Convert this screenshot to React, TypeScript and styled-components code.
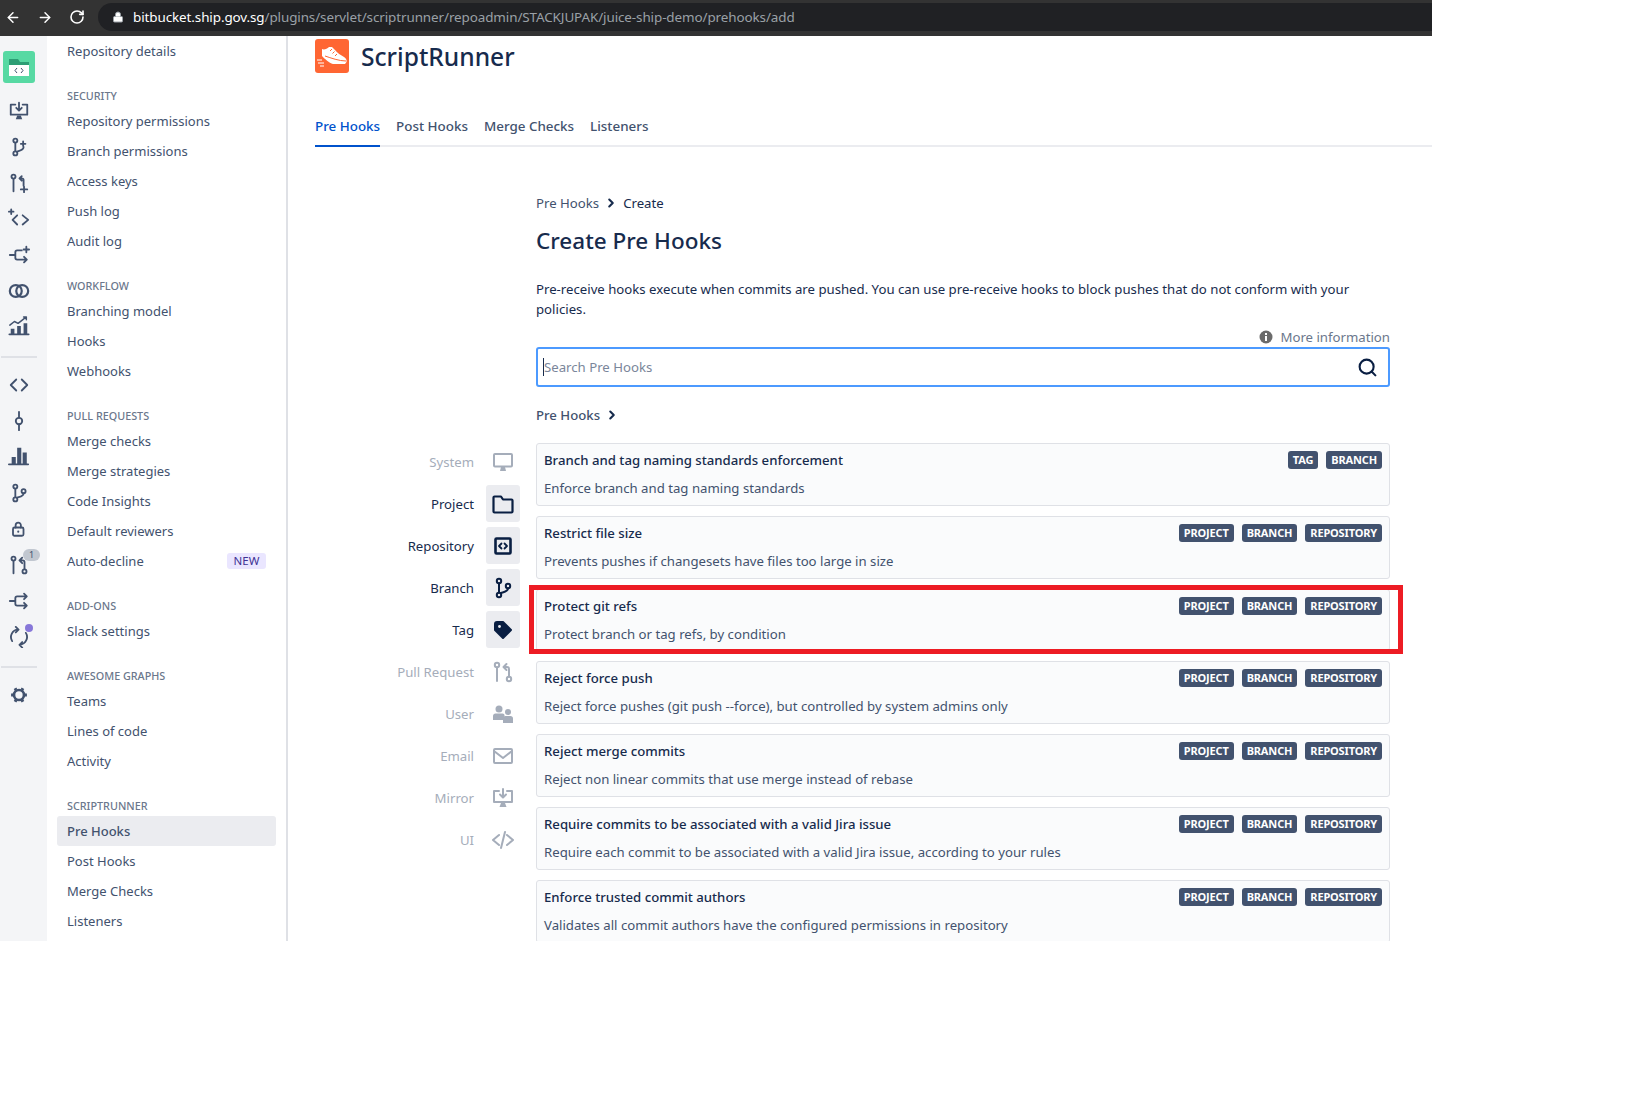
import React from 'react';
import styled, { createGlobalStyle } from 'styled-components';
import { ArrowLeft, ArrowRight, RotateCw, Lock, Search, ChevronRight } from 'lucide-react';

const Global = createGlobalStyle`
  html, body { margin: 0; padding: 0; background: #fff; }
  body { font-family: "Noto Sans", "Open Sans", sans-serif; font-size: 13px; color: #172b4d; }
  * { box-sizing: border-box; }
`;

const Frame = styled.div`
  width: 1432px;
  height: 941px;
  overflow: hidden;
  display: flex;
  flex-direction: column;
`;

const BrowserBar = styled.div`
  height: 36px;
  flex: none;
  background: #333333;
  display: flex;
  align-items: flex-start;
  padding: 3px 0 0 5px;
  color: #fff;
`;

const NavButton = styled.div`
  width: 16px;
  height: 28px;
  margin-right: 16px;
  display: flex;
  align-items: center;
  justify-content: center;
`;

const Address = styled.div`
  flex: 1;
  height: 28px;
  margin-left: -3px;
  border-radius: 14px 0 0 14px;
  background: #202124;
  display: flex;
  align-items: center;
  padding-left: 14px;
  gap: 9px;
  font-size: 13.45px;
  letter-spacing: -0.1px;
  color: #9aa0a6;
  white-space: nowrap;
  b { font-weight: 400; color: #fff; }
`;

const Shell = styled.div`
  flex: 1;
  min-height: 0;
  display: flex;
`;

const Rail = styled.div`
  width: 47px;
  flex: none;
  background: #f4f5f7;
  padding: 15px 9px 0 0;
  display: flex;
  flex-direction: column;
  align-items: center;
`;

const RepoLogo = styled.div`
  width: 32px;
  height: 32px;
  margin-bottom: 10px;
  border-radius: 3px;
  background: #57d9a3;
  display: flex;
  align-items: center;
  justify-content: center;
`;

const RailIcon = styled.div`
  position: relative;
  width: 38px;
  height: 36px;
  flex: none;
  display: flex;
  align-items: center;
  justify-content: center;
  color: #42526e;
`;

const RailRule = styled.div`
  width: 36px;
  height: 2px;
  flex: none;
  margin: 11px 0 9px;
  background: #dfe1e6;
`;

const CountBadge = styled.span`
  position: absolute;
  left: 23px;
  top: 2px;
  width: 17px;
  height: 12px;
  border-radius: 6px;
  background: #c1c7d0;
  color: #42526e;
  font-size: 9px;
  line-height: 12px;
  text-align: center;
`;

const Dot = styled.span`
  position: absolute;
  left: 25px;
  top: 5px;
  width: 8px;
  height: 8px;
  border-radius: 50%;
  background: #8777d9;
`;

const NavPanel = styled.nav`
  width: 241px;
  flex: none;
  padding: 0 10px;
  border-right: 2px solid #dfe1e6;
`;

const NavSection = styled.div`
  & + & { margin-top: 20px; }
`;

const NavHeading = styled.div`
  height: 20px;
  line-height: 20px;
  padding-left: 10px;
  font-size: 10.8px;
  font-weight: 500;
  color: #6b778c;
  text-transform: uppercase;
`;

const NavItem = styled.div<{ $active?: boolean }>`
  height: 30px;
  line-height: 30px;
  padding: 0 10px;
  border-radius: 3px;
  display: flex;
  justify-content: space-between;
  align-items: center;
  color: #42526e;
  font-weight: ${p => (p.$active ? 500 : 400)};
  background: ${p => (p.$active ? '#ebecf0' : 'transparent')};
`;

const NewLozenge = styled.span`
  width: 39px;
  height: 16px;
  line-height: 16px;
  border-radius: 3px;
  background: #eae6ff;
  color: #403294;
  font-size: 11.5px;
  text-align: center;
`;

const Content = styled.main`
  flex: 1;
  min-width: 0;
  padding: 3px 42px 0 27px;
  overflow: hidden;
  font-size: 13.2px;
`;

const Brand = styled.header`
  display: flex;
  align-items: center;
  gap: 12px;
  height: 34px;
`;

const BrandTitle = styled.h1`
  margin: 0;
  font-size: 24.6px;
  font-weight: 500;
  color: #172b4d;
`;

const Tabs = styled.div`
  display: flex;
  gap: 16px;
  margin: 37px -42px 0 0;
  height: 37px;
  border-bottom: 2px solid #ebecf0;
`;

const Tab = styled.div<{ $active?: boolean }>`
  height: 37px;
  line-height: 32px;
  font-size: 13.4px;
  font-weight: 500;
  color: ${p => (p.$active ? '#0052cc' : '#42526e')};
  border-bottom: 2px solid ${p => (p.$active ? '#0052cc' : 'transparent')};
`;

const Intro = styled.section`
  margin: 46px 0 0 221px;
`;

const Crumbs = styled.div`
  height: 20px;
  display: flex;
  align-items: center;
  gap: 5px;
  color: #42526e;
  span:last-child { color: #172b4d; }
`;

const PageTitle = styled.h2`
  margin: 10px 0 0;
  height: 36px;
  line-height: 36px;
  font-size: 22.5px;
  font-weight: 500;
  color: #172b4d;
`;

const Lead = styled.p`
  margin: 20px 0 0;
  line-height: 20px;
  color: #172b4d;
`;

const InfoRow = styled.div`
  margin-top: 8px;
  height: 20px;
  display: flex;
  justify-content: flex-end;
  align-items: center;
  gap: 7px;
  color: #6b778c;
`;

const SearchBox = styled.div`
  height: 40px;
  border: 2px solid #4c9aff;
  border-radius: 3px;
  display: flex;
  align-items: center;
  padding: 0 10px 0 5px;
  color: #091e42;
`;

const Caret = styled.span`
  width: 1px;
  height: 18px;
  flex: none;
  background: #172b4d;
`;

const SearchInput = styled.input`
  flex: 1;
  min-width: 0;
  border: 0;
  outline: 0;
  padding: 0;
  background: transparent;
  font: inherit;
  &::placeholder { color: #7a869a; opacity: 1; }
`;

const GroupLabel = styled.div`
  margin-top: 18px;
  height: 20px;
  display: flex;
  align-items: center;
  gap: 5px;
  font-weight: 500;
  color: #42526e;
`;

const Lower = styled.div`
  margin-top: 18px;
  display: flex;
  gap: 16px;
  align-items: flex-start;
`;

const Categories = styled.div`
  width: 205px;
  flex: none;
  display: flex;
  flex-direction: column;
  gap: 5px;
`;

const CategoryRow = styled.div<{ $on?: boolean }>`
  height: 37px;
  display: flex;
  justify-content: flex-end;
  align-items: center;
  gap: 12px;
  color: ${p => (p.$on ? '#172b4d' : '#a5adba')};
`;

const CategoryIcon = styled.div<{ $on?: boolean }>`
  width: 34px;
  height: 37px;
  border-radius: 3px;
  display: flex;
  align-items: center;
  justify-content: center;
  color: ${p => (p.$on ? '#091e42' : '#a5adba')};
  background: ${p => (p.$on ? '#ebecf0' : 'transparent')};
`;

const Cards = styled.div`
  flex: 1;
  min-width: 0;
  display: flex;
  flex-direction: column;
  gap: 10px;
`;

const Card = styled.article`
  position: relative;
  height: 62.8px;
  flex: none;
  padding: 6px 7px 0;
  background: #fafbfc;
  border: 1px solid #dfe1e6;
  border-radius: 3px;
`;

const CardTop = styled.div`
  display: flex;
  justify-content: space-between;
  align-items: flex-start;
`;

const CardTitle = styled.div`
  font-weight: 500;
  line-height: 20px;
  color: #172b4d;
`;

const CardText = styled.div`
  margin-top: 8px;
  line-height: 20px;
  color: #42526e;
`;

const Scopes = styled.div`
  display: flex;
  gap: 8px;
  margin-top: 1px;
`;

const Scope = styled.span`
  height: 18px;
  line-height: 18px;
  padding: 0 5px;
  border-radius: 3px;
  background: #42526e;
  color: #fff;
  font-size: 11px;
  font-weight: 700;
  letter-spacing: -0.15px;
`;

const Callout = styled.div`
  position: absolute;
  inset: -5px -14px -4px -8px;
  border: 5px solid #ed1c24;
  pointer-events: none;
`;

type IconProps = { size?: number; color?: string };

const Svg: React.FC<IconProps & { children: React.ReactNode }> = ({ size = 24, color = 'currentColor', children }) => (
  <svg width={size} height={size} viewBox="0 0 24 24" fill="none" stroke={color} strokeWidth={2} strokeLinecap="round" strokeLinejoin="round">
    {children}
  </svg>
);

const MirrorIcon = (p: IconProps) => (
  <Svg {...p}>
    <path d="M8 5H3v11h18V5h-5" />
    <path d="M12 3v8M9 8.500l3 3 3-3" />
    <path d="M8.500 21l1.500-4h4l1.500 4z" fill="currentColor" stroke="none" />
  </Svg>
);
const BranchIcon = (p: IconProps) => (
  <Svg {...p}>
    <circle cx="8" cy="5" r="2.200" />
    <circle cx="8" cy="19" r="2.200" />
    <circle cx="17" cy="10" r="2.200" />
    <path d="M8 7.500v9M17 12.500c0 3-4 3.500-7 4.500" />
  </Svg>
);
const BranchAddIcon = (p: IconProps) => (
  <Svg {...p}>
    <circle cx="8" cy="5" r="2.200" />
    <circle cx="8" cy="19" r="2.200" />
    <path d="M8 7.500v9M17 12c0 3.500-4 4-7 5M14 8.500h5M16.500 6v5" />
  </Svg>
);
const PullIcon = (p: IconProps) => (
  <Svg {...p}>
    <circle cx="6" cy="5" r="2.200" />
    <circle cx="18" cy="19" r="2.200" />
    <path d="M6 7.500V21M18 16.500V9c0-1.200-.8-2-2-2h-3M15.500 4L12.500 7l3 3" />
  </Svg>
);
const PullAddIcon = (p: IconProps) => (
  <Svg {...p}>
    <circle cx="6" cy="5" r="2.200" />
    <path d="M6 7.500V21M17 15V9c0-1.200-.8-2-2-2h-2M15 4.500L12.500 7l2.500 2.500M14 19h7M17.500 16v6" />
  </Svg>
);
const CodeIcon = (p: IconProps) => (
  <Svg {...p}>
    <path d="M9 6l-6 6 6 6M15 6l6 6-6 6" />
  </Svg>
);
const CodeAddIcon = (p: IconProps) => (
  <Svg {...p}>
    <path d="M10 8l-5 5 5 5M16 8l6 5-6 5M1 4h5M3.500 1.500v5" />
  </Svg>
);
const MergeIcon = (p: IconProps) => (
  <Svg {...p}>
    <path d="M2 12h6M8 12V9a2 2 0 012-2h10M8 12v3a2 2 0 002 2h10M17.500 4l3 3-3 3M17.500 14l3 3-3 3" />
  </Svg>
);
const MergeAddIcon = (p: IconProps) => (
  <Svg {...p}>
    <path d="M2 12h6M8 12V9a2 2 0 012-2h5M8 12v3a2 2 0 002 2h10M17.500 14l3 3-3 3M17 6h6M20 3v6" />
  </Svg>
);
const VennIcon = (p: IconProps) => (
  <Svg {...p}>
    <circle cx="8.500" cy="12" r="6.500" strokeWidth={2.400} />
    <circle cx="15.500" cy="12" r="6.500" strokeWidth={2.400} />
  </Svg>
);
const GrowthIcon = (p: IconProps) => (
  <Svg {...p}>
    <g transform="translate(0 -2)">
      <path d="M2 12l5-4 4 2 9-7M17 3h3v3" strokeWidth={1.600} />
      <path d="M3 16h4v6H3zM10 13h4v9h-4zM17 10h4v12h-4z" fill="currentColor" stroke="none" />
      <path d="M1.500 22h21" />
    </g>
  </Svg>
);
const CommitIcon = (p: IconProps) => (
  <Svg {...p}>
    <circle cx="12" cy="12" r="3.500" />
    <path d="M12 2v6M12 16v6" />
  </Svg>
);
const BarsIcon = (p: IconProps) => (
  <Svg {...p}>
    <g transform="translate(-2 -2)">
      <path d="M6 14h4.500v8H6zM12 4h4.500v18H12zM18 9h4.500v13H18z" fill="currentColor" stroke="none" />
      <path d="M3 22h21" />
    </g>
  </Svg>
);
const LockIcon = (p: IconProps) => (
  <Svg {...p}>
    <rect x="4" y="10" width="14" height="11" rx="2" strokeWidth={2.400} />
    <path d="M7.500 10V7a3.500 3.500 0 017 0v3" strokeWidth={2.400} />
    <circle cx="11" cy="15.500" r="1.400" fill="currentColor" stroke="none" />
  </Svg>
);
const SyncIcon = (p: IconProps) => (
  <Svg {...p}>
    <path d="M4.500 16.500A8.500 8.500 0 0111 3.600M8.500 1l3 3-3 3" />
    <path d="M19.500 7.500A8.500 8.500 0 0113 20.400M15.500 17.500l-3 3 3 3" />
  </Svg>
);
const GearIcon = (p: IconProps) => (
  <Svg {...p}>
    <circle cx="12" cy="12" r="6" strokeWidth={3.200} />
    <path
      d="M19 12h2.500M2.500 12H5M15.500 18.060l1.250 2.170M8.500 5.940L7.250 3.770M8.500 18.060l-1.250 2.170M15.500 5.940l1.250-2.170"
      strokeWidth={3.600}
      strokeLinecap="butt"
    />
  </Svg>
);
const MonitorIcon = (p: IconProps) => (
  <Svg {...p}>
    <rect x="3" y="4" width="18" height="12.500" rx="1" />
    <path d="M9 21l1-4h4l1 4z" fill="currentColor" stroke="none" />
  </Svg>
);
const FolderIcon = (p: IconProps) => (
  <Svg {...p}>
    <path d="M2.500 5.500a1 1 0 011-1h6.500l2 3h8.500a1 1 0 011 1v11a1 1 0 01-1 1h-17a1 1 0 01-1-1z" strokeWidth={2.200} />
  </Svg>
);
const RepoIcon = (p: IconProps) => (
  <Svg {...p}>
    <rect x="4.500" y="4.500" width="15" height="15" rx="1" strokeWidth={2.600} />
    <path d="M10.500 9.500L8 12l2.500 2.500M13.500 9.500L16 12l-2.500 2.500" strokeWidth={1.800} />
  </Svg>
);
const TagIcon = (p: IconProps) => (
  <Svg {...p}>
    <path d="M4 6a2 2 0 012-2h6l8 8-8 8-8-8z" fill="currentColor" />
    <circle cx="8.500" cy="8.500" r="1.400" fill="#ebecf0" stroke="none" />
  </Svg>
);
const UsersIcon = (p: IconProps) => (
  <Svg {...p}>
    <g fill="currentColor" stroke="none">
      <circle cx="8" cy="7" r="3.500" />
      <circle cx="17" cy="10" r="3" />
      <path d="M2 14c0-1.500 1-2.500 2.500-2.500h7c1.500 0 2 1 2 2V18H2z" />
      <path d="M12 17c0-2 1-3 2.500-3h5c1.500 0 2.500 1 2.500 2.500V21H12z" />
    </g>
  </Svg>
);
const MailIcon = (p: IconProps) => (
  <Svg {...p}>
    <rect x="3" y="5" width="18" height="14" rx="1" />
    <path d="M3 7l9 7 9-7" />
  </Svg>
);
const SourceIcon = (p: IconProps) => (
  <Svg {...p}>
    <path d="M8 7l-6 5 6 5M16 7l6 5-6 5M14 4l-4 16" />
  </Svg>
);
const InfoIcon = () => (
  <svg width="14" height="14" viewBox="0 0 14 14">
    <circle cx="7" cy="7" r="6.500" fill="#6b6b6b" />
    <rect x="6" y="6" width="2" height="5" fill="#fff" />
    <rect x="6" y="3" width="2" height="2" fill="#fff" />
  </svg>
);
const RepoLogoGlyph = () => (
  <svg width="22" height="22" viewBox="0 0 22 22">
    <path d="M1 3h9l2 3H1z" fill="#2d9e75" />
    <rect x="1" y="6" width="20" height="13" fill="#2d9e75" />
    <rect x="1" y="9" width="20" height="11" fill="#fff" />
    <path d="M9 12l-2 2.500L9 17M13 12l2 2.500L13 17" fill="none" stroke="#42526e" strokeWidth="1" />
  </svg>
);
const ShoeLogo = () => (
  <svg width="34" height="34" viewBox="0 0 34 34">
    <rect width="34" height="34" rx="3" fill="#ff6633" />
    <path d="M7 10c2 1 5 0 7-2l3 0 3 3c2 3 6 5 9 7 2 1 3 3 2.500 5l-1.500 2H18c-4-1-8-5-11-8z" fill="#fff" />
    <path d="M10 17c6 2 14 5 21 5" fill="none" stroke="#ff6633" strokeWidth="1" />
    <path d="M17 10l-2 2M19.500 12.500l-2 2M22 15l-2 2" fill="none" stroke="#ff6633" strokeWidth="1" />
    <path d="M2 21h5M3 24h6M5 27h4" stroke="#fff" strokeWidth="1" />
  </svg>
);

const railTop = [MirrorIcon, BranchAddIcon, PullAddIcon, CodeAddIcon, MergeAddIcon, VennIcon, GrowthIcon];

const navSections = [
  { items: ['Repository details'] },
  { title: 'Security', items: ['Repository permissions', 'Branch permissions', 'Access keys', 'Push log', 'Audit log'] },
  { title: 'Workflow', items: ['Branching model', 'Hooks', 'Webhooks'] },
  { title: 'Pull requests', items: ['Merge checks', 'Merge strategies', 'Code Insights', 'Default reviewers', 'Auto-decline'] },
  { title: 'Add-ons', items: ['Slack settings'] },
  { title: 'Awesome graphs', items: ['Teams', 'Lines of code', 'Activity'] },
  { title: 'ScriptRunner', items: ['Pre Hooks', 'Post Hooks', 'Merge Checks', 'Listeners'] },
];

const categories = [
  { label: 'System', Icon: MonitorIcon },
  { label: 'Project', Icon: FolderIcon, on: true },
  { label: 'Repository', Icon: RepoIcon, on: true },
  { label: 'Branch', Icon: BranchIcon, on: true },
  { label: 'Tag', Icon: TagIcon, on: true },
  { label: 'Pull Request', Icon: PullIcon },
  { label: 'User', Icon: UsersIcon },
  { label: 'Email', Icon: MailIcon },
  { label: 'Mirror', Icon: MirrorIcon },
  { label: 'UI', Icon: SourceIcon },
];

const allScopes = ['PROJECT', 'BRANCH', 'REPOSITORY'];

const hooks = [
  { title: 'Branch and tag naming standards enforcement', text: 'Enforce branch and tag naming standards', scopes: ['TAG', 'BRANCH'] },
  { title: 'Restrict file size', text: 'Prevents pushes if changesets have files too large in size', scopes: allScopes },
  { title: 'Protect git refs', text: 'Protect branch or tag refs, by condition', scopes: allScopes, marked: true },
  { title: 'Reject force push', text: 'Reject force pushes (git push --force), but controlled by system admins only', scopes: allScopes },
  { title: 'Reject merge commits', text: 'Reject non linear commits that use merge instead of rebase', scopes: allScopes },
  { title: 'Require commits to be associated with a valid Jira issue', text: 'Require each commit to be associated with a valid Jira issue, according to your rules', scopes: allScopes },
  { title: 'Enforce trusted commit authors', text: 'Validates all commit authors have the configured permissions in repository', scopes: allScopes },
];

export default function App() {
  return (
    <Frame>
      <Global />
      <BrowserBar>
        <NavButton><ArrowLeft size={19} strokeWidth={2.200} /></NavButton>
        <NavButton><ArrowRight size={19} strokeWidth={2.200} /></NavButton>
        <NavButton><RotateCw size={16} strokeWidth={2.400} /></NavButton>
        <Address>
          <Lock size={12} fill="#fff" strokeWidth={2} />
          <span><b>bitbucket.ship.gov.sg</b>/plugins/servlet/scriptrunner/repoadmin/STACKJUPAK/juice-ship-demo/prehooks/add</span>
        </Address>
      </BrowserBar>
      <Shell>
        <Rail>
          <RepoLogo><RepoLogoGlyph /></RepoLogo>
          {railTop.map((Icon, i) => <RailIcon key={i}><Icon size={22} /></RailIcon>)}
          <RailRule />
          <RailIcon><CodeIcon size={22} /></RailIcon>
          <RailIcon><CommitIcon size={22} /></RailIcon>
          <RailIcon><BarsIcon size={22} /></RailIcon>
          <RailIcon><BranchIcon size={22} /></RailIcon>
          <RailIcon><LockIcon size={18} /></RailIcon>
          <RailIcon><PullIcon size={22} /><CountBadge>1</CountBadge></RailIcon>
          <RailIcon><MergeIcon size={22} /></RailIcon>
          <RailIcon><SyncIcon size={22} /><Dot /></RailIcon>
          <RailRule />
          <RailIcon><GearIcon size={20} /></RailIcon>
        </Rail>
        <NavPanel>
          {navSections.map((s, i) => (
            <NavSection key={i}>
              {s.title && <NavHeading>{s.title}</NavHeading>}
              {s.items.map(item => (
                <NavItem key={item} $active={s.title === 'ScriptRunner' && item === 'Pre Hooks'}>
                  {item}
                  {item === 'Auto-decline' && <NewLozenge>NEW</NewLozenge>}
                </NavItem>
              ))}
            </NavSection>
          ))}
        </NavPanel>
        <Content>
          <Brand>
            <ShoeLogo />
            <BrandTitle>ScriptRunner</BrandTitle>
          </Brand>
          <Tabs>
            <Tab $active>Pre Hooks</Tab>
            <Tab>Post Hooks</Tab>
            <Tab>Merge Checks</Tab>
            <Tab>Listeners</Tab>
          </Tabs>
          <Intro>
            <Crumbs>
              <span>Pre Hooks</span>
              <ChevronRight size={14} strokeWidth={3.600} color="#172b4d" />
              <span>Create</span>
            </Crumbs>
            <PageTitle>Create Pre Hooks</PageTitle>
            <Lead>Pre-receive hooks execute when commits are pushed. You can use pre-receive hooks to block pushes that do not conform with your policies.</Lead>
            <InfoRow><InfoIcon /> More information</InfoRow>
            <SearchBox>
              <Caret />
              <SearchInput placeholder="Search Pre Hooks" />
              <Search size={21} strokeWidth={2.400} />
            </SearchBox>
            <GroupLabel>Pre Hooks <ChevronRight size={14} strokeWidth={3.600} color="#172b4d" /></GroupLabel>
          </Intro>
          <Lower>
            <Categories>
              {categories.map(({ label, Icon, on }) => (
                <CategoryRow key={label} $on={on}>
                  {label}
                  <CategoryIcon $on={on}><Icon size={24} /></CategoryIcon>
                </CategoryRow>
              ))}
            </Categories>
            <Cards>
              {hooks.map(h => (
                <Card key={h.title}>
                  <CardTop>
                    <CardTitle>{h.title}</CardTitle>
                    <Scopes>{h.scopes.map(s => <Scope key={s}>{s}</Scope>)}</Scopes>
                  </CardTop>
                  <CardText>{h.text}</CardText>
                  {h.marked && <Callout />}
                </Card>
              ))}
            </Cards>
          </Lower>
        </Content>
      </Shell>
    </Frame>
  );
}
